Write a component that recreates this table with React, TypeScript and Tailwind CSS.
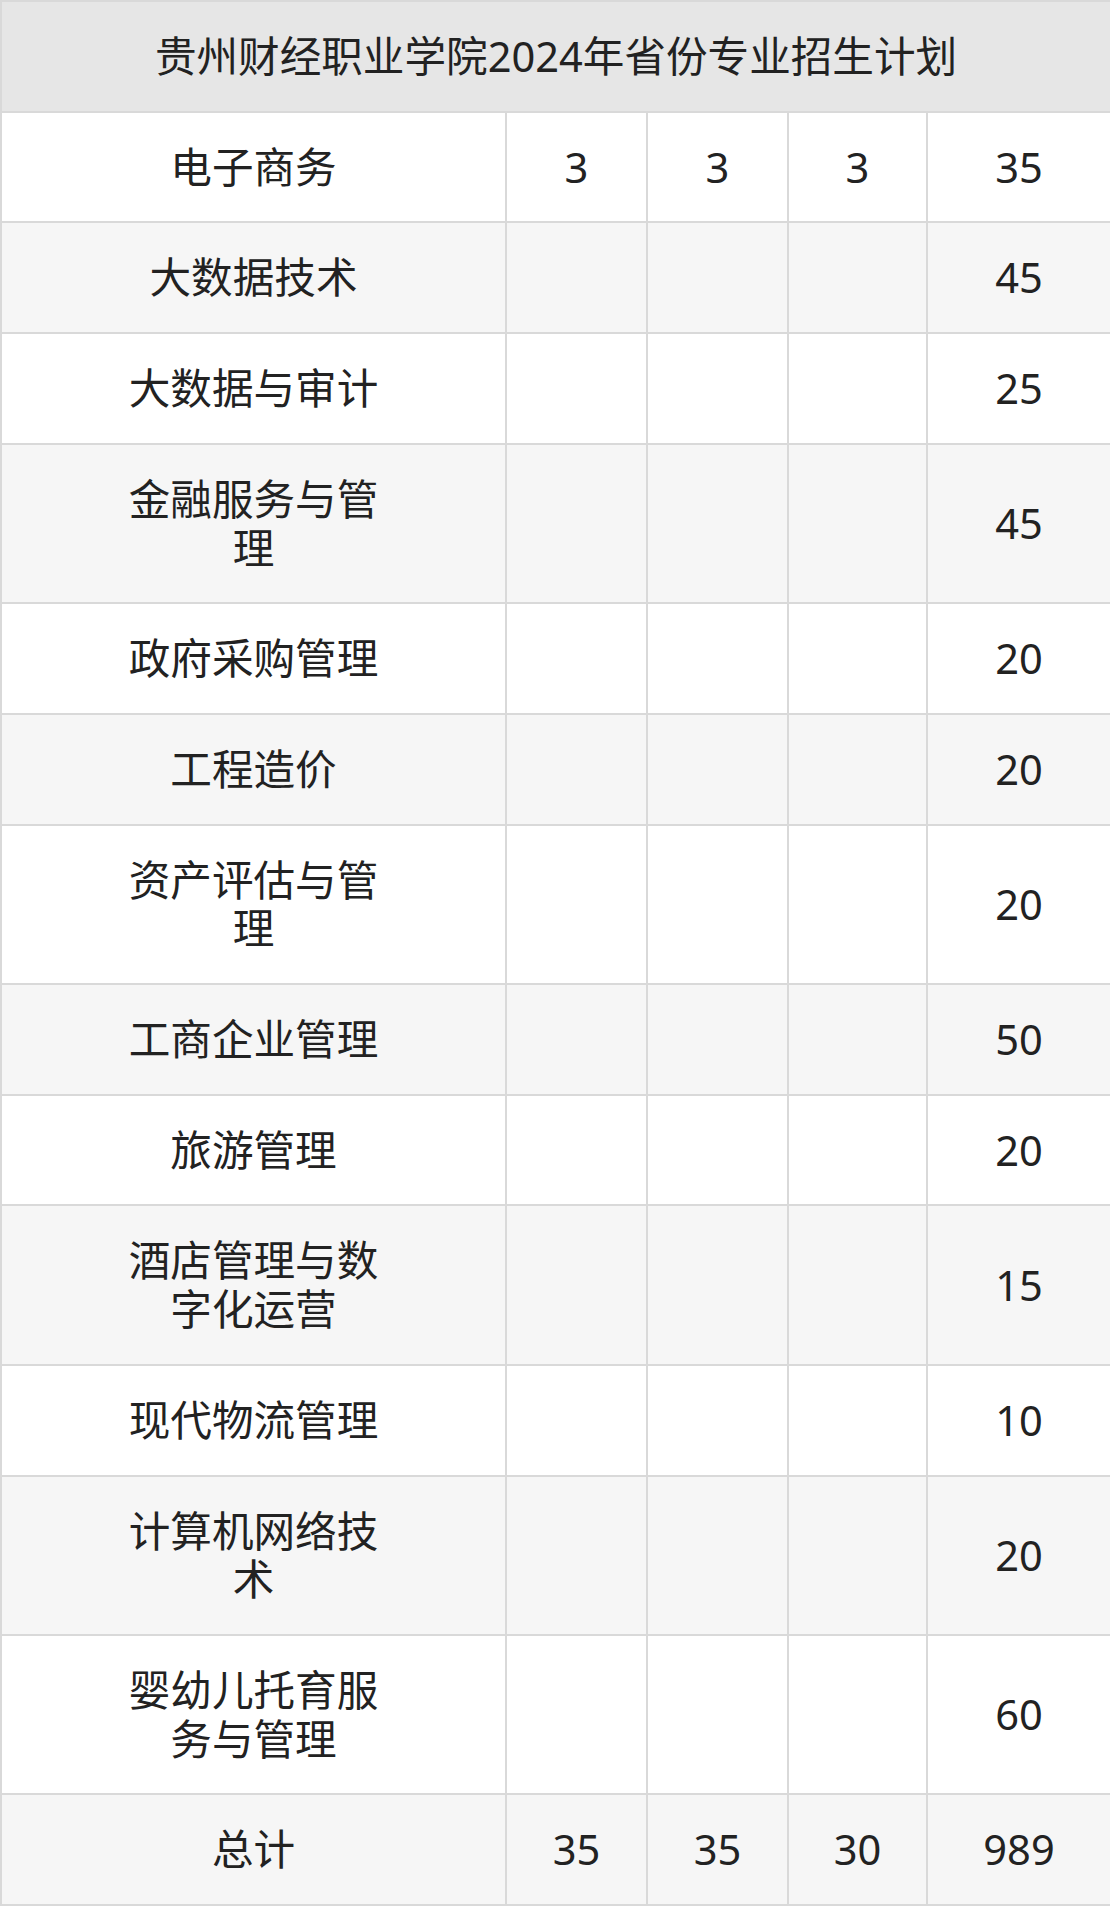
const rows: { name: string; a?: string; b?: string; c?: string; total: string }[] = [
  { name: "电子商务", a: "3", b: "3", c: "3", total: "35" },
  { name: "大数据技术", total: "45" },
  { name: "大数据与审计", total: "25" },
  { name: "金融服务与管理", total: "45" },
  { name: "政府采购管理", total: "20" },
  { name: "工程造价", total: "20" },
  { name: "资产评估与管理", total: "20" },
  { name: "工商企业管理", total: "50" },
  { name: "旅游管理", total: "20" },
  { name: "酒店管理与数字化运营", total: "15" },
  { name: "现代物流管理", total: "10" },
  { name: "计算机网络技术", total: "20" },
  { name: "婴幼儿托育服务与管理", total: "60" },
  { name: "总计", a: "35", b: "35", c: "30", total: "989" },
];

const cell = "border-2 border-[#d9d9d9] py-[30px] text-center align-middle leading-[48.7px]";

export default function App() {
  return (
    <div className="w-[1110px] bg-white text-[#222222] font-['Noto_Sans','Noto_Sans_CJK_SC',sans-serif]">
      <table className="w-[1110px] table-fixed border-collapse text-[41.6px]">
        <colgroup>
          <col className="w-[505px]" />
          <col className="w-[141px]" />
          <col className="w-[141px]" />
          <col className="w-[139px]" />
          <col className="w-[184px]" />
        </colgroup>
        <thead>
          <tr>
            <th colSpan={5} className={`${cell} bg-[#e6e6e6] font-normal`}>
              贵州财经职业学院2024年省份专业招生计划
            </th>
          </tr>
        </thead>
        <tbody>
          {rows.map((r, i) => (
            <tr key={r.name} className={i % 2 === 1 ? "bg-[#f6f6f6]" : "bg-white"}>
              <td className={cell}>
                <div className="mx-auto w-[280px]">{r.name}</div>
              </td>
              <td className={cell}>{r.a}</td>
              <td className={cell}>{r.b}</td>
              <td className={cell}>{r.c}</td>
              <td className={cell}>{r.total}</td>
            </tr>
          ))}
        </tbody>
      </table>
    </div>
  );
}
